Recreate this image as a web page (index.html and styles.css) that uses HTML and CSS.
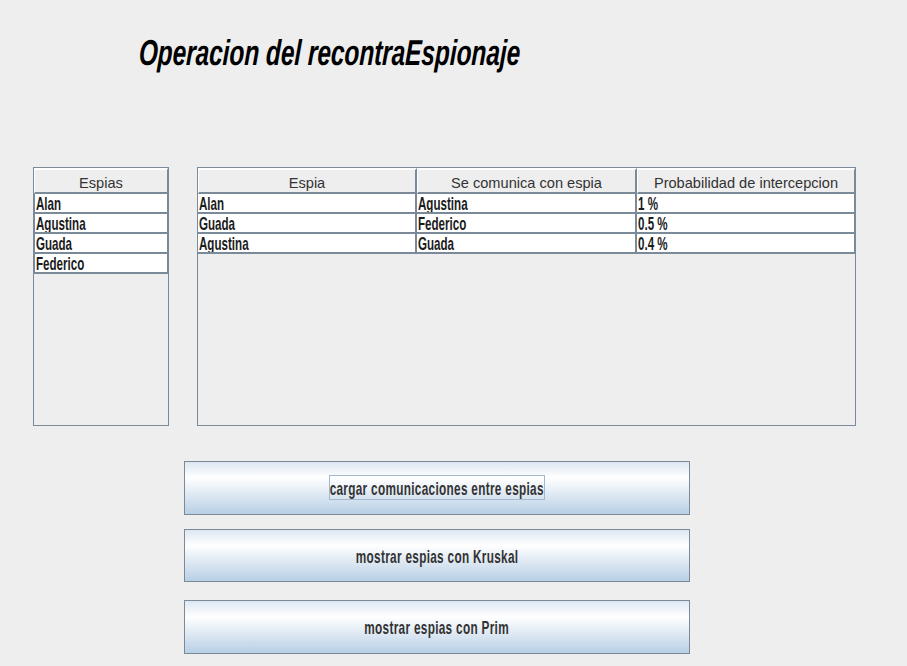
FILE: index.html
```html
<!DOCTYPE html>
<html lang="es">
<head>
<meta charset="utf-8">
<title>Operacion del recontraEspionaje</title>
<link rel="stylesheet" href="styles.css">
</head>
<body>
<main class="page">
  <h1 class="title"><span>Operacion del recontraEspionaje</span></h1>
  <section class="tables">
    <div class="panel panel-left">
      <div class="row head"><div class="cell">Espias</div></div>
      <div class="row"><div class="cell"><span>Alan</span></div></div>
      <div class="row"><div class="cell"><span>Agustina</span></div></div>
      <div class="row"><div class="cell"><span>Guada</span></div></div>
      <div class="row"><div class="cell"><span>Federico</span></div></div>
    </div>
    <div class="panel panel-right">
      <div class="row head cols"><div class="cell">Espia</div><div class="cell">Se comunica con espia</div><div class="cell">Probabilidad de intercepcion</div></div>
      <div class="row cols"><div class="cell"><span>Alan</span></div><div class="cell"><span>Agustina</span></div><div class="cell"><span>1 %</span></div></div>
      <div class="row cols"><div class="cell"><span>Guada</span></div><div class="cell"><span>Federico</span></div><div class="cell"><span>0.5 %</span></div></div>
      <div class="row cols"><div class="cell"><span>Agustina</span></div><div class="cell"><span>Guada</span></div><div class="cell"><span>0.4 %</span></div></div>
    </div>
  </section>
  <section class="actions">
    <button class="btn btn-a" type="button"><span class="focus"><span class="label">cargar comunicaciones entre espias</span></span></button>
    <button class="btn btn-b" type="button"><span class="label">mostrar espias con Kruskal</span></button>
    <button class="btn btn-c" type="button"><span class="label">mostrar espias con Prim</span></button>
  </section>
</main>
</body>
</html>
```

FILE: styles.css
```css
* { box-sizing: border-box; }
html, body { margin: 0; height: 100%; overflow: hidden; }
body { background: #eeeeee; font-family: "Liberation Sans", sans-serif; }
.page { width: 907px; height: 666px; display: flex; flex-direction: column; }
.title {
  margin: 33px 0 0 139px;
  height: 40px;
  font-size: 36px;
  line-height: 40px;
  font-weight: 700;
  font-style: italic;
  color: #000;
  white-space: nowrap;
}
.title span { display: inline-block; transform-origin: left center; transform: scaleX(0.676) skewX(-4deg); }
.tables { margin: 94px 0 0 33px; display: flex; gap: 28px; }
.panel { height: 259px; border: 1px solid #7a8a99; background: #eeeeee; }
.panel-left { width: 136px; }
.panel-right { width: 659px; }
.row { height: 20px; display: flex; }
.cols > .cell:nth-child(1) { flex: 0 0 219px; }
.cols > .cell:nth-child(2) { flex: 0 0 220px; }
.cols > .cell:nth-child(3) { flex: 1; }
.cell {
  flex: 1;
  background: #fff;
  border-right: 2px solid #7a8a99;
  border-left: 1px solid #7a8a99;
  border-bottom: 2px solid #7a8a99;
  padding-left: 1px;
  font-size: 19px;
  font-weight: 700;
  line-height: 20px;
  color: #1c1c1c;
  white-space: nowrap;
  overflow: hidden;
}
.cell:last-child { border-right-width: 1px; }
.cell span { display: inline-block; transform-origin: left center; transform: scaleX(0.61); }
.cols > .cell { border-left: 0; }
.row.head { height: 26px; }
.head .cell {
  background: #eeeeee;
  border-top: 2px solid #fff;
  border-left: 1px solid #fff;
  border-right: 2px solid #7a8a99;
  border-bottom: 2px solid #7a8a99;
  padding: 0;
  text-align: center;
  font-size: 14.6px;
  font-weight: 400;
  line-height: 26px;
  color: #333;
}
.head .cell:last-child { border-right-width: 1px; }
.actions { margin: 35px 0 0 184px; display: flex; flex-direction: column; width: 506px; }
.btn {
  width: 506px;
  padding: 0;
  border: 1px solid #7a8a99;
  background: linear-gradient(#dde7f2 0%, #ffffff 30%, #b8cfe5 100%);
  font-family: inherit;
  font-size: 19px;
  font-weight: 700;
  letter-spacing: 0.5px;
  color: #333;
  display: flex;
  align-items: center;
  justify-content: center;
  white-space: nowrap;
}
.label { display: block; flex: none; transform: scaleX(0.62); }
.btn-a { height: 54px; padding-bottom: 1px; }
.btn-b { height: 53px; margin-top: 14px; padding-top: 2px; }
.btn-c { height: 54px; margin-top: 18px; padding-top: 2px; }
.focus { display: flex; justify-content: center; width: 216px; height: 25px; line-height: 25px; border: 1px solid #a3b8cc; }
```
